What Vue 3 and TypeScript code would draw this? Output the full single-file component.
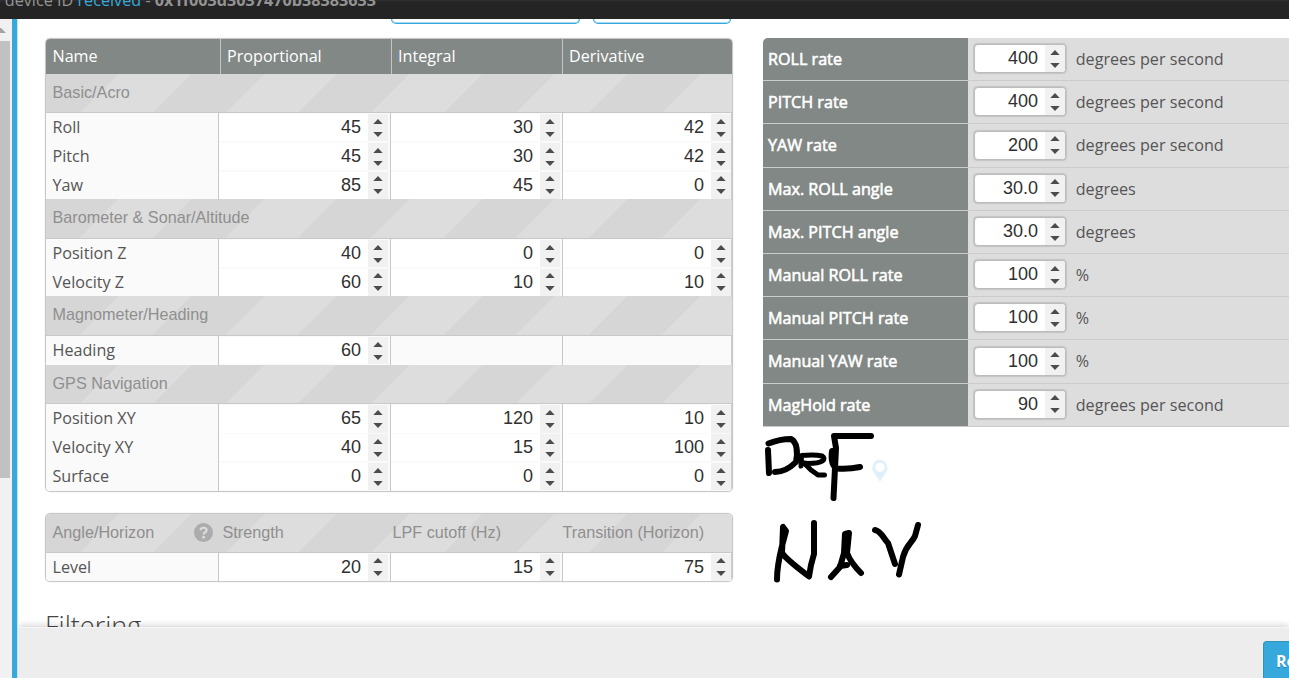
<script setup lang="ts">
interface Row { name: string; values: (string | null)[] }
interface Section { title: string; rows: Row[] }
interface Rate { label: string; value: string; unit: string }

const sections: Section[] = [
  {
    title: 'Basic/Acro',
    rows: [
      { name: 'Roll', values: ['45', '30', '42'] },
      { name: 'Pitch', values: ['45', '30', '42'] },
      { name: 'Yaw', values: ['85', '45', '0'] },
    ],
  },
  {
    title: 'Barometer & Sonar/Altitude',
    rows: [
      { name: 'Position Z', values: ['40', '0', '0'] },
      { name: 'Velocity Z', values: ['60', '10', '10'] },
    ],
  },
  { title: 'Magnometer/Heading', rows: [{ name: 'Heading', values: ['60', null, null] }] },
  {
    title: 'GPS Navigation',
    rows: [
      { name: 'Position XY', values: ['65', '120', '10'] },
      { name: 'Velocity XY', values: ['40', '15', '100'] },
      { name: 'Surface', values: ['0', '0', '0'] },
    ],
  },
]

const level: Row = { name: 'Level', values: ['20', '15', '75'] }

const rates: Rate[] = [
  { label: 'ROLL rate', value: '400', unit: 'degrees per second' },
  { label: 'PITCH rate', value: '400', unit: 'degrees per second' },
  { label: 'YAW rate', value: '200', unit: 'degrees per second' },
  { label: 'Max. ROLL angle', value: '30.0', unit: 'degrees' },
  { label: 'Max. PITCH angle', value: '30.0', unit: 'degrees' },
  { label: 'Manual ROLL rate', value: '100', unit: '%' },
  { label: 'Manual PITCH rate', value: '100', unit: '%' },
  { label: 'Manual YAW rate', value: '100', unit: '%' },
  { label: 'MagHold rate', value: '90', unit: 'degrees per second' },
]
</script>

<template>
  <div class="app">
    <div class="log">
      <span class="log-line">e device ID <span class="ok">received</span> - <b>0x1f003d3037470b38383633</b></span>
    </div>
    <div class="main">
      <div class="scroll">
        <svg class="arrow" width="6" height="5" viewBox="0 0 6 5"><path d="M-5 5 L0.5 -0.5 L6 5 Z" fill="#a3a3a3" /></svg>
        <div class="thumb"></div>
      </div>
      <div class="content">
        <div class="buttons">
          <div class="outline first"></div>
          <div class="outline second"></div>
        </div>
        <div class="columns">
          <div class="left">
            <div class="table">
              <div class="head">
                <span>Name</span><span>Proportional</span><span>Integral</span><span>Derivative</span>
              </div>
              <template v-for="s in sections" :key="s.title">
                <div class="stripe"><span>{{ s.title }}</span></div>
                <div v-for="r in s.rows" :key="r.name" class="row">
                  <div class="name">{{ r.name }}</div>
                  <div v-for="(v, i) in r.values" :key="i" class="cell">
                    <div v-if="v !== null" class="num">
                      <span class="val">{{ v }}</span>
                      <span class="spin"><svg width="10" height="18" viewBox="0 0 10 18"><path d="M5 0 L9.7 5 H0.3 Z M0.3 13 H9.7 L5 18 Z" fill="#4c4c4c" /></svg></span>
                    </div>
                  </div>
                </div>
              </template>
            </div>
            <div class="table second-table">
              <div class="stripe level-head">
                <span class="lh-name">Angle/Horizon
                  <svg class="help" width="19" height="19" viewBox="0 0 19 19"><circle cx="9.5" cy="9.5" r="9.5" fill="#acacac" /><path d="M6.5 7.2 C6.6 3.9 12.6 3.9 12.6 7.2 C12.6 9.3 9.6 9.2 9.6 11.4" fill="none" stroke="#ddd" stroke-width="2.2" /><circle cx="9.6" cy="14.2" r="1.4" fill="#ddd" /></svg>
                </span>
                <span>Strength</span><span>LPF cutoff (Hz)</span><span>Transition (Horizon)</span>
              </div>
              <div class="row">
                <div class="name">{{ level.name }}</div>
                <div v-for="(v, i) in level.values" :key="i" class="cell">
                  <div class="num">
                    <span class="val">{{ v }}</span>
                    <span class="spin"><svg width="10" height="18" viewBox="0 0 10 18"><path d="M5 0 L9.7 5 H0.3 Z M0.3 13 H9.7 L5 18 Z" fill="#4c4c4c" /></svg></span>
                  </div>
                </div>
              </div>
            </div>
            <div class="filtering">Filtering</div>
          </div>
          <div class="right">
            <div class="rates">
              <div v-for="r in rates" :key="r.label" class="rate">
                <div class="rlabel">{{ r.label }}</div>
                <div class="field">
                  <span class="val">{{ r.value }}</span>
                  <span class="spin"><svg width="10" height="18" viewBox="0 0 10 18"><path d="M5 0 L9.7 5 H0.3 Z M0.3 13 H9.7 L5 18 Z" fill="#4c4c4c" /></svg></span>
                </div>
                <div class="unit">{{ r.unit }}</div>
              </div>
            </div>
            <svg class="ink" width="200" height="170" viewBox="763 427 200 170">
              <path d="M880 482 C877 476 872.200 472 872.200 467.500 A7.600 7.600 0 0 1 887.500 467.500 C887.500 472 883 476 880 482 Z M880 462.500 A4.700 4.700 0 1 0 880 471.900 A4.700 4.700 0 1 0 880 462.500 Z" fill="#dff0fa" fill-rule="evenodd" />
              <g fill="none" stroke="#000" stroke-width="6" stroke-linecap="round" stroke-linejoin="round">
                <path d="M768 450 L769 473" />
                <path d="M768.500 443.500 C776 440.500 785 439 791 439 C797 442 798 452 796 462 C790 468 783 472 775 472" />
                <path stroke-width="5" d="M801 466 L801.500 455.500 C808 455 818 455 822 456 C827 459 823 463.500 808 463.500 L804 463 L811 470 L818 475 L824.500 475" />
                <path d="M871 436 L834 436 L836 448 L833.500 498" />
                <path d="M832 451 C831 459 832 466 837 468.500 C844 469 853 468.500 860 467" />
                <path d="M777 579.500 C777 566 780 554 782 546 L786 531 L783 527 L782 553 C787 560 798 568 809 576.500 L811 565 L814 554 V523" />
                <path d="M831 577 L840 567 L844 553 L845 534 L849 533 L847 553 C850 561 855 567 861 573 M840 566 L847 565" />
                <path d="M875 530 C881 531 884 539 888 543 L895 564 M899 574.500 L903 557 C906 545 912 543 915 536 L918 525" />
              </g>
            </svg>
          </div>
        </div>
        <div class="footer"><div class="reset">Reset</div></div>
      </div>
    </div>
  </div>
</template>

<style>
html, body { margin: 0; overflow: hidden; background: #fff; }
</style>

<style scoped>
.app { width: 1289px; height: 678px; overflow: hidden; font: 16px/20px "Open Sans", sans-serif; color: #555; display: flex; flex-direction: column; }
.app * { box-sizing: border-box; }
.log { height: 19px; flex: none; background: linear-gradient(#2f2f2f 0, #242424 2px); color: #949494; overflow: hidden; white-space: nowrap; }
.log-line { display: block; margin: -11px 0 0 -8.500px; line-height: 22px; font-size: 16.200px; }
.ok { color: #37a8db; }
.main { flex: 1; display: flex; min-height: 0; }
.scroll { width: 18px; flex: none; background: linear-gradient(90deg, #f1f1f1 12px, #37a8db 12px, #37a8db 17px, #c3e5f4 17px); }
.arrow { display: block; margin-top: 9px; }
.thumb { width: 10px; height: 437px; margin-top: 8px; background: #c1c1c1; }
.content { flex: 1; min-width: 0; display: flex; flex-direction: column; background: #fff; overflow: hidden; }
.buttons { height: 19px; flex: none; display: flex; gap: 13px; padding-left: 373px; }
.outline { height: 5px; border: 1px solid #37a8db; border-top: 0; border-radius: 0 0 5px 5px; box-shadow: inset 0 -1px #a5d8ef, inset 1px 0 #c5e6f5, inset -1px 0 #c5e6f5; }
.first { width: 189px; }
.second { width: 138px; }
.columns { height: 589px; flex: none; display: flex; padding-left: 27px; }
.left { width: 688px; flex: none; height: 589px; }
.table { border: 1px solid #c8c8c8; border-radius: 5px; overflow: hidden; box-shadow: 0 0 1px #bbb; }
.head { height: 34.500px; display: grid; grid-template-columns: 174px 171px 171px 1fr; background: #828885; color: #fff; line-height: 35px; }
.head span { padding-left: 6px; border-left: 1px solid #c4c6c5; font-size: 16.150px; }
.head span:first-child { border: 0; padding-left: 6.500px; }
.stripe { height: 39.500px; border-bottom: 1px solid #c8c8c8; font: 16.200px/36.800px "Liberation Sans", sans-serif; color: #8f8f8f; padding-left: 6.500px; background: repeating-linear-gradient(135deg, #d6d6d6 0, #d6d6d6 51.400px, #ddd 51.500px, #ddd 102.800px); }
.row { height: 28.800px; display: grid; grid-template-columns: 172px 172px 172px 1fr; background: #fafafa; }
.name { padding-left: 6.500px; line-height: 29.400px; font-size: 16.150px; }
.cell { border-left: 1px solid #c8c8c8; padding: 1px 2px 1px 0; }
.cell:last-child { padding-right: 0; border-right: 1px solid #ccc; }
.num { height: 100%; background: #fff; display: flex; }
.val { flex: 1; text-align: right; padding-right: 7px; font: 18px/27px "Liberation Sans", sans-serif; color: #303030; }
.num .val { padding-right: 7px; }
.spin { width: 20px; flex: none; background: #f1f1f1; display: flex; align-items: center; justify-content: center; }
.spin svg { display: block; }
.second-table { margin-top: 21.500px; }
.level-head { height: 38.500px; display: grid; grid-template-columns: 170px 170px 170px 1fr; line-height: 37px; white-space: nowrap; }
.lh-name { display: flex; align-items: center; justify-content: space-between; padding-right: 9.500px; }
.filtering { font-size: 27px; line-height: 34px; font-weight: 300; margin-top: 27px; color: #444; }
.right { margin-left: 30px; width: 526px; flex: none; }
.rates { height: 389px; border-top-left-radius: 5px; overflow: hidden; background: #ddd; }
.rate { height: 43.200px; display: flex; border-bottom: 1px solid #ccc; }
.rlabel { width: 205px; flex: none; background: #828885; color: #fff; padding-left: 5px; line-height: 42.700px; font-size: 16.150px; -webkit-text-stroke: 0.600px #fff; }
.field { width: 91.500px; height: 29px; margin: 6.300px 10.200px 0 6px; display: flex; border: 1px solid #bcbcbc; border-radius: 4px; background: #fff; box-shadow: 0 0 1px 0.500px #c4c4c4; overflow: hidden; flex: none; }
.field .spin { padding-left: 1px; }
.field .val { padding-right: 6.500px; }
.unit { line-height: 42.700px; white-space: nowrap; font-size: 16.150px; }
.ink { display: block; }
.footer { position: relative; flex: 1; background: #ededed; border-top: 1px solid #f6f6f6; box-shadow: 0 -1px 7px rgba(0, 0, 0, 0.200); display: flex; justify-content: flex-end; }
.reset { width: 26px; height: 60px; margin-top: 13px; flex: none; overflow: hidden; border: 1px solid #3394b5; border-right: 0; border-radius: 4px 0 0 0; background: #37a8db; color: #fff; font-weight: 700; line-height: 39px; padding-left: 12px; text-shadow: 0 1px rgba(0, 0, 0, 0.250); }
</style>
